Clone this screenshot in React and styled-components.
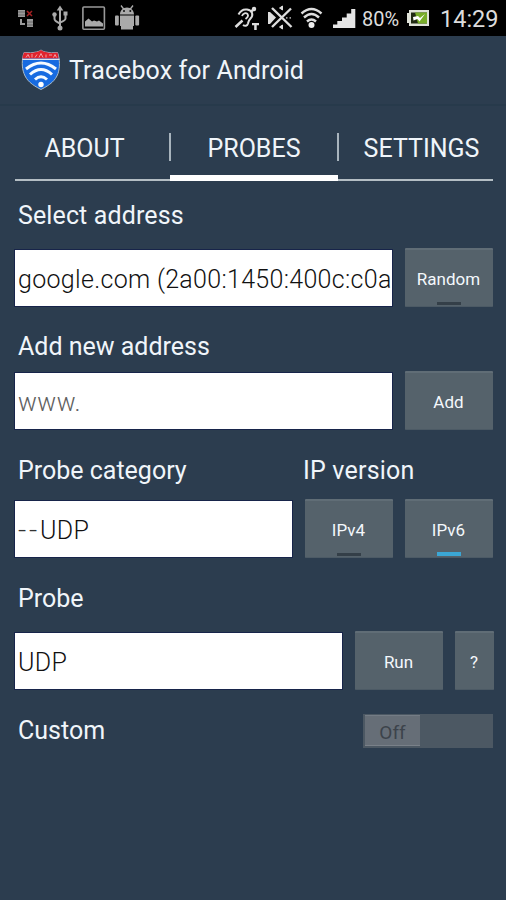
import React from "react";
import styled, { createGlobalStyle } from "styled-components";

const GlobalStyle = createGlobalStyle`
  *, *::before, *::after { box-sizing: border-box; }
  body { margin: 0; background: #2c3d4f; }
`;

const Screen = styled.div`
  width: 506px;
  height: 900px;
  overflow: hidden;
  display: flex;
  flex-direction: column;
  background: #2c3d4f;
  color: #f0f5fa;
  font-family: Roboto, sans-serif;
  font-size: 25px;
`;

const StatusBar = styled.header`
  flex: none;
  display: flex;
  align-items: center;
  justify-content: space-between;
  height: 36px;
  padding: 0 8px 0 17px;
  background: #000;
`;

const StatusGroup = styled.div`
  display: grid;
  grid-template-columns: ${(p) => p.$columns};
  align-items: center;
  height: 36px;
`;

const StatusText = styled.span`
  color: #dcdcdc;
  font-size: ${(p) => p.$size}px;
  line-height: 34px;
  padding-top: 2px;
  white-space: nowrap;
`;

const AppBar = styled.div`
  flex: none;
  display: flex;
  align-items: center;
  gap: 8px;
  height: 70px;
  padding: 0 21px 1px;
  border-bottom: 2px solid #273a4b;
`;

const Title = styled.h1`
  margin: 2px 0 0;
  font-size: 25px;
  font-weight: 400;
  line-height: 34px;
  letter-spacing: 0.1px;
  white-space: nowrap;
`;

const Tabs = styled.nav`
  flex: none;
  display: grid;
  grid-template-columns: 155px 168px 155px;
  height: 75px;
  margin: 0 13px 0 15px;
  border-bottom: 2px solid #b4bec4;
`;

const Tab = styled.div`
  display: flex;
  align-items: center;
  justify-content: center;
  height: 75px;
  padding: ${(p) => p.$pad};
  white-space: nowrap;
`;

const ActiveTab = styled(Tab)`
  justify-content: space-between;
  margin: 0 -2px 0 -1px;
  background: linear-gradient(#fff, #fff) 1px 100% / 168px 6px no-repeat;
`;

const TabDivider = styled.i`
  flex: none;
  width: 2px;
  height: 28px;
  margin-top: -4px;
  background: #a8b4bd;
`;

const Form = styled.main`
  display: flex;
  flex-direction: column;
  padding: 15px 13px 0 14px;
`;

const LabelRow = styled.div`
  display: flex;
  height: 34px;
  padding-left: 4px;
  margin: ${(p) => p.$top}px 0 ${(p) => p.$bottom}px;
`;

const Label = styled.label`
  width: ${(p) => p.$width || "auto"};
  line-height: 34px;
  letter-spacing: ${(p) => p.$spacing || 0}px;
  white-space: nowrap;
`;

const ControlRow = styled.div`
  display: flex;
  gap: 12px;
  height: 59px;
`;

const Field = styled.div`
  flex: none;
  width: ${(p) => p.$width}px;
  height: 58px;
  margin-top: 1px;
  padding: 0 1px 0 3px;
  border: 1px solid #17244a;
  background: #fff;
  color: ${(p) => (p.$hint ? "#606060" : "#111")};
`;

const FieldText = styled.div`
  height: 56px;
  overflow: hidden;
  line-height: 59px;
  font-weight: 300;
  letter-spacing: ${(p) => p.$spacing || 0}px;
  white-space: nowrap;
`;

const Dashes = styled.span`
  display: inline-block;
  transform: scaleX(1.15);
  transform-origin: 0 50%;
  margin-right: 3px;
  color: #333;
  letter-spacing: 2.3px;
`;

const Button = styled.button`
  flex: none;
  display: grid;
  grid-template-rows: 1fr 4px;
  justify-items: center;
  align-items: center;
  width: ${(p) => p.$width || 88}px;
  height: 59px;
  padding: 7px 1px 1px 0;
  border: 0;
  border-top: 2px solid #606d76;
  border-bottom: 1px solid #4c5a65;
  background: #55626b;
  color: #f4f8fc;
  font: 400 17px Roboto, sans-serif;
  border-radius: 1px;
`;

const Indicator = styled.i`
  width: 24px;
  height: ${(p) => (p.$on ? 4 : 3)}px;
  background: ${(p) => (p.$on ? "#3ba7d5" : p.$off ? "#343f48" : "transparent")};
`;

const SwitchRow = styled.div`
  display: flex;
  justify-content: space-between;
  height: 34px;
  margin-top: 24px;
  padding-left: 4px;
`;

const Switch = styled.div`
  width: 130px;
  height: 34px;
  padding: 1px 2px;
  background: #4c5863;
`;

const Thumb = styled.div`
  width: 55px;
  height: 31px;
  border-top: 1px solid #747c85;
  border-bottom: 1px solid #7a8189;
  background: #666e77;
  color: #3c434b;
  font-size: 19px;
  line-height: 33px;
  text-align: center;
`;

function NetworkIcon() {
  return (
    <svg width="18" height="20" viewBox="17 8 18 20">
      <g fill="#999">
        <path d="M18 10h7v7h-7zM27 19h6v8h-6z" />
        <path d="M20 19h2v4h3v2h-5z" />
      </g>
      <path d="M18 12h7M18 15h7M27 22h6M27 25h6" stroke="#555" strokeWidth=".7" />
      <path d="M27 11l5 5M32 11l-5 5" stroke="#a32022" strokeWidth="1.5" />
    </svg>
  );
}

function UsbIcon() {
  return (
    <svg width="18" height="26" viewBox="51 5 18 26">
      <g fill="none" stroke="#aaa" strokeWidth="2">
        <path d="M60 9v18M54.500 16v3q0 2 5.500 4.500M65.500 14v4.500q0 2-5.500 4" />
      </g>
      <path d="M60 5.500l3.300 5h-6.600zM63.500 11.500h4v4h-4z" fill="#aaa" />
      <circle cx="54.500" cy="14.500" r="2.200" fill="#aaa" />
      <circle cx="60" cy="28" r="2.500" fill="#aaa" />
    </svg>
  );
}

function PictureIcon() {
  return (
    <svg width="24" height="25" viewBox="82 6 24 25">
      <rect x="82.900" y="7" width="21.500" height="22.300" rx="1" fill="none" stroke="#999" strokeWidth="1.600" />
      <path d="M85 26.500v-5l3.500-3 3.500 3 2-1 3 1 2-1 4 3v3z" fill="#aaa" />
    </svg>
  );
}

function AndroidIcon() {
  return (
    <svg width="26" height="26" viewBox="114 6 26 26">
      <g fill="#aaa">
        <path d="M120 15.500c0-4 3-7 7-7s7 3 7 7zM120 16.500h14V27h-14z" />
        <rect x="115" y="16.500" width="3.800" height="10" rx="1" />
        <rect x="135.300" y="16.500" width="3.800" height="10" rx="1" />
        <path d="M121 26h12v4.500h-12z" />
      </g>
      <path d="M121 6.500l3 4M133 6.500l-3 4" stroke="#aaa" strokeWidth="1.300" />
      <circle cx="124" cy="12" r="1" fill="#111" />
      <circle cx="130.300" cy="12" r="1" fill="#111" />
    </svg>
  );
}

function HearingIcon() {
  return (
    <svg width="27" height="27" viewBox="234 5 27 27">
      <g fill="none" stroke="#ddd" strokeWidth="2">
        <path d="M238.500 14.500c2-4 5-5.500 8.500-5 6 1 6.500 6 3.500 9-2 2-2 3-2.500 5-.7 2.500-3 3-5 1.500" />
        <path d="M242 16c1-3 4-3.500 5.500-2 1.500 2 0 3.500-2 5" strokeWidth="1.800" />
        <path d="M235.500 27l7-6.500M250.500 12l5-4" strokeWidth="2.500" />
      </g>
      <circle cx="254" cy="9" r="2.200" fill="#ddd" />
      <path d="M252 23h7v2.300h-2.300V30h-2.500v-4.700H252z" fill="#ddd" />
    </svg>
  );
}

function MuteIcon() {
  return (
    <svg width="26" height="26" viewBox="267 6 26 26">
      <path d="M268 13h2l6 5.500-6 6.500h-2z" fill="#ddd" />
      <path d="M272 9l19.500 19M291 9.500L272 28" fill="none" stroke="#ddd" strokeWidth="2.400" />
      <path d="M279.500 9l3-2v4zM279.500 28l3 2v-4z" fill="#ddd" stroke="#ddd" />
      <path d="M286 18.800h1.500M289.500 18.800h1.500" stroke="#999" strokeWidth="1.800" />
    </svg>
  );
}

function WifiIcon() {
  return (
    <svg width="23" height="23" viewBox="300 7 23 23">
      <path d="M301.500 13.500q10-9 20 0M304 17.500q7.500-7 15 0M307 21.500q4.500-4 9 0" fill="none" stroke="#ddd" strokeWidth="2.400" />
      <circle cx="311.500" cy="25" r="3" fill="#eee" />
    </svg>
  );
}

function SignalIcon() {
  return (
    <svg width="24" height="21" viewBox="332 8 24 21">
      <path d="M333 24.500h4.500V28H333zM337.300 21h4.800v7h-4.800zM342 17.500h4.800V28H342zM346.700 13.500h4.600V28h-4.600zM351.200 9h4.100v19h-4.100z" fill="#e5e5e5" />
    </svg>
  );
}

function BatteryIcon() {
  return (
    <svg width="24" height="18" viewBox="406 10 24 18">
      <path d="M409 11h20v16h-20v-3h-2v-10h2z" fill="#dfe2d8" />
      <path d="M411 13.500h16v11h-16z" fill="#202a12" />
      <path d="M415 13.500h12v11h-9z" fill="#78ad29" />
      <path d="M413 18l5-1 2 2 5-4-5.500 7.500-2-2.500-4 1.500z" fill="#fff" />
    </svg>
  );
}

function ShieldLogo() {
  return (
    <svg width="40" height="41" viewBox="21 49 40 41">
      <path d="M24 52.500q7 1 12.500-.5 3-.5 4.500-2 1.500 1.500 4.500 2 5.500 1.500 12 .5c2.500 7 2.500 15 .5 21-2.500 7-8 11.500-17 16-9-4.500-14.500-9-17-16-2.300-6-2.300-14 0-21z" fill="#176be1" stroke="#a9bccb" strokeWidth="1" />
      <path d="M24 52.500q7 1 12.500-.5 3-.5 4.500-2 1.500 1.500 4.500 2 5.500 1.500 12 .5.900 3 1 6h-36q.2-3 1.500-6z" fill="#e0232d" />
      <path d="M22.500 59.300h37" stroke="#dbe5ef" strokeWidth="1.200" />
      <path d="M26 57.500l2-3 1.500 3M32 57.500v-3.500M35 57.500l2-3M39 57.500l2-4 2 4M46 54.500v3M49 55h3M53.500 57.500l1.500-3 1.500 3" fill="none" stroke="#f0bdc0" strokeWidth=".8" />
      <path d="M26 69q15-12 30 0M30 74.500q11-10 22 0M35 79.500q6-5.500 12 0" fill="none" stroke="#f5faff" strokeWidth="3" />
      <circle cx="41" cy="84.500" r="2.700" fill="#fff" />
    </svg>
  );
}

export default function App() {
  return (
    <Screen>
      <GlobalStyle />
      <StatusBar>
        <StatusGroup $columns="34px 31px 32px 26px">
          <NetworkIcon />
          <UsbIcon />
          <PictureIcon />
          <AndroidIcon />
        </StatusGroup>
        <StatusGroup $columns="33px 33px 32px 30px 44px 34px 58px">
          <HearingIcon />
          <MuteIcon />
          <WifiIcon />
          <SignalIcon />
          <StatusText $size={20}>80%</StatusText>
          <BatteryIcon />
          <StatusText $size={23.5}>14:29</StatusText>
        </StatusGroup>
      </StatusBar>
      <AppBar>
        <ShieldLogo />
        <Title>Tracebox for Android</Title>
      </AppBar>
      <Tabs>
        <Tab $pad="10px 16px 0 0">ABOUT</Tab>
        <ActiveTab $pad="10px 1px 0 0">
          <TabDivider />
          PROBES
          <TabDivider />
        </ActiveTab>
        <Tab $pad="10px 0 0 12px">SETTINGS</Tab>
      </Tabs>
      <Form>
        <LabelRow $top={3} $bottom={15}>
          <Label $spacing={0.12}>Select address</Label>
        </LabelRow>
        <ControlRow>
          <Field $width={379}>
            <FieldText $spacing={0.31}>google.com (2a00:1450:400c:c0a</FieldText>
          </Field>
          <Button>Random<Indicator $off /></Button>
        </ControlRow>
        <LabelRow $top={23} $bottom={7}>
          <Label>Add new address</Label>
        </LabelRow>
        <ControlRow>
          <Field $width={379} $hint>
            <FieldText $spacing={0.5}>www.</FieldText>
          </Field>
          <Button>Add<Indicator /></Button>
        </ControlRow>
        <LabelRow $top={24} $bottom={11}>
          <Label $width="285px">Probe category</Label>
          <Label $spacing={0.2}>IP version</Label>
        </LabelRow>
        <ControlRow>
          <Field $width={279}>
            <FieldText $spacing={0.4}><Dashes>--</Dashes>UDP</FieldText>
          </Field>
          <Button>IPv4<Indicator $off /></Button>
          <Button>IPv6<Indicator $on /></Button>
        </ControlRow>
        <LabelRow $top={24} $bottom={15}>
          <Label>Probe</Label>
        </LabelRow>
        <ControlRow>
          <Field $width={329}>
            <FieldText $spacing={0.4}>UDP</FieldText>
          </Field>
          <Button>Run<Indicator /></Button>
          <Button $width={39}>?<Indicator /></Button>
        </ControlRow>
        <SwitchRow>
          <Label>Custom</Label>
          <Switch><Thumb>Off</Thumb></Switch>
        </SwitchRow>
      </Form>
    </Screen>
  );
}
